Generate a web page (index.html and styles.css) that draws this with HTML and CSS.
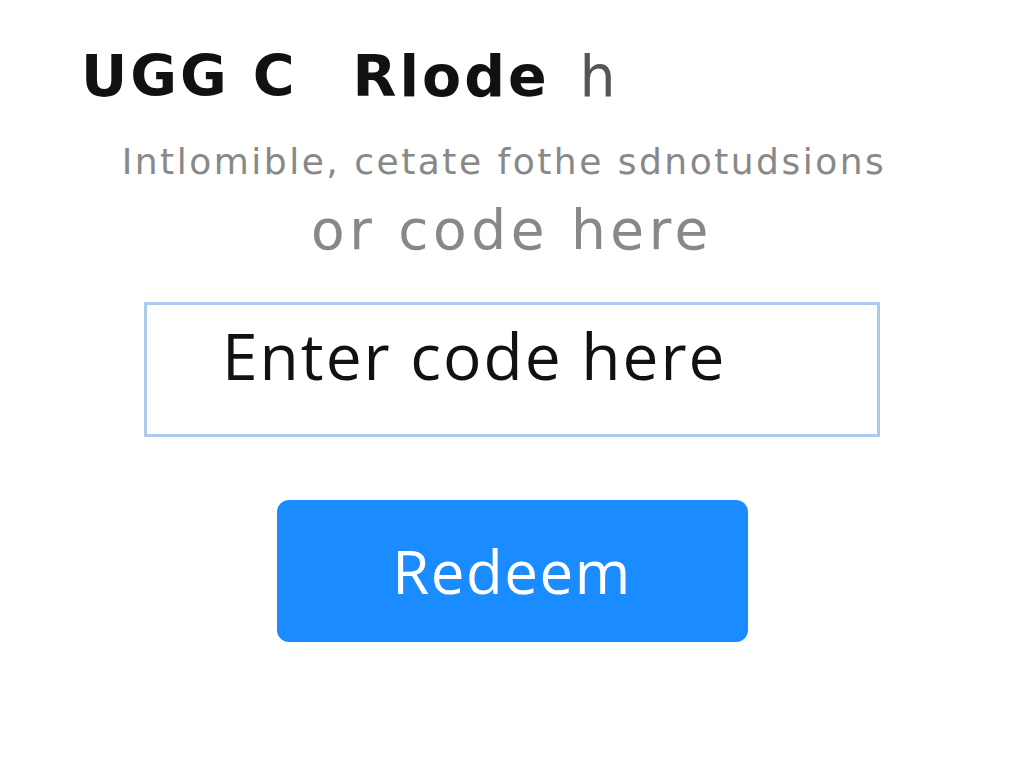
FILE: index.html
```html
<!DOCTYPE html>
<html lang="en">
<head>
    <meta charset="UTF-8">
    <meta name="viewport" content="width=device-width, initial-scale=1.0">
    <title>Redeem Code</title>
    <link rel="stylesheet" href="styles.css">
</head>
<body>
    <section class="redeem">
        <h1 class="title"><span class="title-main">UGG C</span><span class="title-main title-gap">Rlode</span><span class="title-soft">h</span></h1>
        <p class="hint">Intlomible, cetate fothe sdnotudsions</p>
        <p class="hint-big">or code here</p>

        <form class="redeem-form">
            <div class="code-box">
                <input type="text" class="code-input" placeholder="Enter code here">
            </div>
            <button type="submit" class="btn-redeem">Redeem</button>
        </form>
    </section>
</body>
</html>
```

FILE: styles.css
```css
body {
    margin: 0;
    background: #fff;
    font-family: 'Open Sans', Arial, sans-serif;
    color: #111;
}

.redeem {
    width: 1024px;
    height: 768px;
    box-sizing: border-box;
    padding-top: 36px;
    display: flex;
    flex-direction: column;
}

.title {
    margin: 0 0 0 81px;
    font-family: 'DejaVu Sans', 'Open Sans', sans-serif;
    font-size: 57px;
    font-weight: 700;
    line-height: 80px;
    letter-spacing: 3px;
}

.title-gap {
    margin-left: 55px;
}

.title-soft {
    margin-left: 30px;
    font-weight: 400;
    color: #555;
}

.hint {
    margin: 20px 0 0;
    padding-right: 16px;
    text-align: center;
    font-family: 'DejaVu Sans', 'Open Sans', sans-serif;
    font-size: 36px;
    line-height: 52px;
    letter-spacing: 2.5px;
    color: #888;
}

.hint-big {
    margin: 2px 0 0;
    text-align: center;
    font-family: 'DejaVu Sans', 'Open Sans', sans-serif;
    font-size: 55px;
    line-height: 80px;
    letter-spacing: 4.5px;
    color: #888;
}

.redeem-form {
    display: flex;
    flex-direction: column;
    align-items: center;
    margin-top: 32px;
}

.code-box {
    width: 736px;
    height: 135px;
    box-sizing: border-box;
    border: 3px solid #abcaee;
    display: flex;
    align-items: center;
    padding-left: 75px;
}

.code-input {
    border: none;
    outline: none;
    width: 100%;
    font-family: inherit;
    font-size: 64px;
    letter-spacing: 2px;
    color: #111;
    background: transparent;
    padding: 0 0 28px;
}

.code-input::placeholder {
    color: #111;
    opacity: 1;
}

.btn-redeem {
    margin-top: 63px;
    width: 471px;
    height: 142px;
    border: none;
    border-radius: 12px;
    background: #1a8cff;
    color: #fff;
    font-family: inherit;
    font-size: 60px;
    font-weight: 500;
    letter-spacing: 1.5px;
    cursor: pointer;
}
```
